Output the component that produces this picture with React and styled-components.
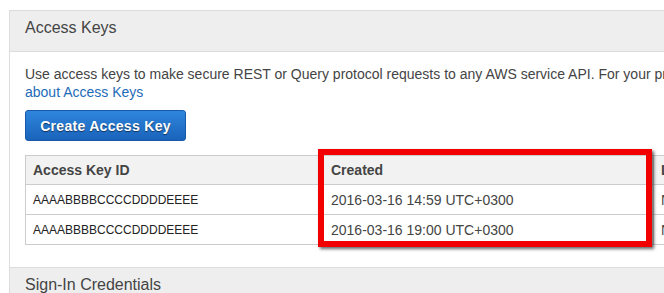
import React from "react";
import styled, { createGlobalStyle } from "styled-components";

const Global = createGlobalStyle`
  html, body { margin: 0; padding: 0; background: #fff; overflow: hidden; }
  body { font-family: Arial, "Liberation Sans", Helvetica, sans-serif; color: #444; }
`;

const Page = styled.div`
  padding: 10px 0 0 9px;
  width: 1100px;
`;

const Panel = styled.section`
  border: 1px solid #dcdcdc;
  border-bottom: none;
  background: #fff;
`;

const PanelHeader = styled.h2`
  margin: 0;
  height: 41px;
  box-sizing: border-box;
  padding: 7px 15px 0 15px;
  line-height: 19px;
  background: #eeeeee;
  border-bottom: 1px solid #dcdcdc;
  font-size: 16px;
  font-weight: normal;
  color: #444;
`;

const PanelBody = styled.div`
  padding: 13px 15px 22px 15px;
`;

const Intro = styled.p`
  margin: 0;
  font-size: 14px;
  line-height: 18px;
  color: #444;
  white-space: nowrap;
`;

const Link = styled.a`
  color: #1e6bb8;
  text-decoration: none;
`;

const Button = styled.button`
  margin-top: 9px;
  width: 161px;
  height: 31px;
  border: 1px solid #1758a8;
  border-radius: 3px;
  background: linear-gradient(#2f86dc, #1a63bb);
  color: #fff;
  font-family: Arial, "Liberation Sans", sans-serif;
  font-size: 14px;
  letter-spacing: 0.3px;
  font-weight: bold;
  text-shadow: 0 1px 1px rgba(0, 0, 0, 0.55);
  padding: 0;
  display: block;
`;

const TableWrap = styled.div`
  position: relative;
  margin-top: 14px;
`;

const Table = styled.table`
  border-collapse: collapse;
  width: 1000px;
  table-layout: fixed;
`;

const Th = styled.th`
  width: ${(p) => p.$w || "auto"};
  height: 28px;
  padding: 0 7px;
  text-align: left;
  background: #f2f2f2;
  border: 1px solid #cccccc;
  font-size: 14px;
  font-weight: bold;
  color: #444;
`;

const Td = styled.td`
  height: 29px;
  padding: 0 7px;
  border: 1px solid #cccccc;
  font-size: ${(p) => (p.$small ? "12px" : "14px")};
  color: ${(p) => (p.$small ? "#222" : "#444")};
  white-space: nowrap;
`;

const Highlight = styled.div`
  position: absolute;
  left: 293px;
  top: -6px;
  width: 322px;
  height: 86px;
  border: 6px solid #f20000;
  box-shadow: 2px 2px 3px rgba(0, 0, 0, 0.6);
  pointer-events: none;
`;

const rows = [
  { id: "AAAABBBBCCCCDDDDEEEE", created: "2016-03-16 14:59 UTC+0300", last: "N/A" },
  { id: "AAAABBBBCCCCDDDDEEEE", created: "2016-03-16 19:00 UTC+0300", last: "N/A" },
];

export default function App() {
  return (
    <>
      <Global />
      <Page>
        <Panel>
          <PanelHeader>Access Keys</PanelHeader>
          <PanelBody>
            <Intro>
              Use access keys to make secure REST or Query protocol requests to any AWS service API. For your protection, you should never share your secret keys with anyone. Learn more
              <br />
              <Link href="#">about Access Keys</Link>
            </Intro>
            <Button>Create Access Key</Button>
            <TableWrap>
              <Table>
                <thead>
                  <tr>
                    <Th $w="283px">Access Key ID</Th>
                    <Th $w="315px">Created</Th>
                    <Th>Last Used</Th>
                  </tr>
                </thead>
                <tbody>
                  {rows.map((r, i) => (
                    <tr key={i}>
                      <Td $small>{r.id}</Td>
                      <Td>{r.created}</Td>
                      <Td>{r.last}</Td>
                    </tr>
                  ))}
                </tbody>
              </Table>
              <Highlight />
            </TableWrap>
          </PanelBody>
        </Panel>
        <Panel>
          <PanelHeader>Sign-In Credentials</PanelHeader>
        </Panel>
      </Page>
    </>
  );
}
